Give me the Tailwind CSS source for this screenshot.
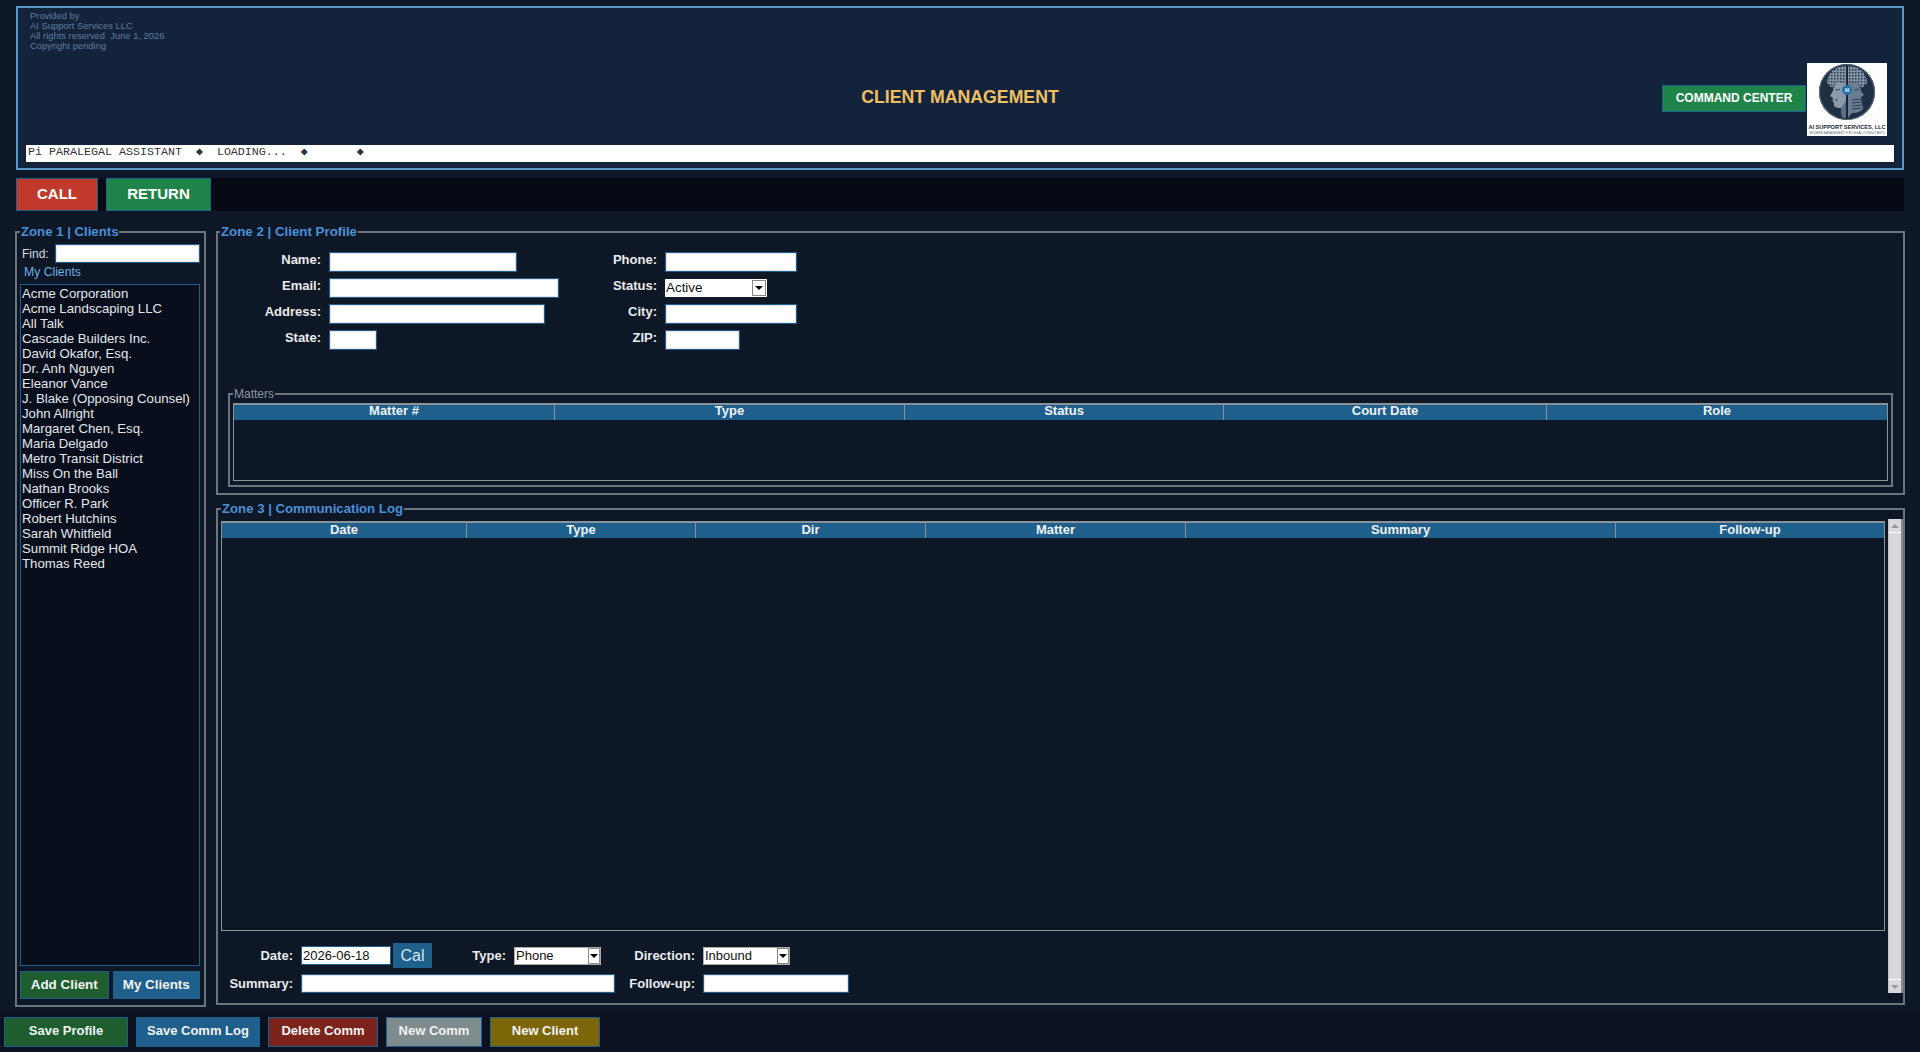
<!DOCTYPE html>
<html lang="en">

<head>
  <meta charset="UTF-8" />
  <title>Client Management</title>
  <script src="https://cdn.jsdelivr.net/npm/@tailwindcss/browser@4"></script>
</head>

<body class="h-[1052px] overflow-hidden bg-[#0d1726] font-['Liberation_Sans',Arial,sans-serif] text-[13px] text-white">
  <!-- header -->
  <header class="mx-[16px] mt-[6px] h-[164px] border-2 border-[#5499c7] bg-[#14233c] flex flex-col">
    <div class="h-[137px] grid grid-cols-[1fr_auto_1fr]">
      <div class="pl-[12px] pt-[3px] text-[9.4px] leading-[10px] text-[#5f7d9c]">
        <p>Provided by</p>
        <p>AI Support Services LLC</p>
        <p>All rights reserved&nbsp; June 1, 2026</p>
        <p>Copyright pending</p>
      </div>
      <h1 class="self-center pt-[42px] text-[17.7px] font-bold text-[#f0c060]">CLIENT MANAGEMENT</h1>
      <div class="flex justify-end items-start pt-[55px] pr-[15px]">
        <button class="mt-[22px] w-[144px] h-[27px] pb-[2px] bg-[#1e8449] border border-[#1f5f8b] text-[12px] font-bold">COMMAND CENTER</button>
        <svg width="80" height="73" viewBox="0 0 80 73" class="ml-[1px]">
          <defs>
            <pattern id="hatch" width="3" height="3" patternUnits="userSpaceOnUse">
              <rect width="3" height="3" fill="#8494a5" />
              <rect width="1.5" height="1.5" fill="#22344a" />
            </pattern>
          </defs>
          <rect width="80" height="73" fill="#fff" />
          <circle cx="40" cy="29" r="28" fill="#1f3044" />
          <circle cx="40" cy="29" r="27.5" fill="none" stroke="#56687c" stroke-width="1.2" />
          <!-- hair / circuit texture -->
          <path d="M39 3 C28 3 20 10 20 20 L25 25 L30 19 L39 20 Z" fill="url(#hatch)" />
          <path d="M41 3 C52 3 60 10 60 20 L55 25 L50 19 L41 20 Z" fill="url(#hatch)" />
          <!-- left head, facing left -->
          <path d="M39 20 L30 19 C27 22 26 26 26 28 L23 33 L26 35 L25.5 38 L27 40 L27 43 C29 45 32 45 34 45 L35 54 L39 55 Z" fill="#8c9bab" />
          <path d="M28 27 L33 26.5 M28 37 L31 37" stroke="#33465a" stroke-width="1" fill="none" />
          <path d="M34 45 L35 54 L39 55 L39 38 Z" fill="#5b6d81" />
          <!-- right head, facing right, bearded -->
          <path d="M41 20 L50 19 C53 22 54 26 54 28 L57 32 L54 34 L56 46 C52 50 48 50 45 50 L41 55 Z" fill="#6b7d91" />
          <path d="M47 27 L52 26.5" stroke="#2b3d52" stroke-width="1" fill="none" />
          <path d="M45 37 L55 36 M45 40 L55 39 M45 43 L55 42 M45 46 L54 45" stroke="#2b3d52" stroke-width="1" fill="none" />
          <rect x="39.2" y="2" width="1.6" height="54" fill="#16263a" />
          <circle cx="40" cy="27" r="5" fill="#2470a8" />
          <text x="40" y="29" text-anchor="middle" font-family="Liberation Sans" font-size="5" font-weight="700" fill="#fff">AI</text>
          <text x="40" y="66" text-anchor="middle" textLength="77" font-family="Liberation Sans" font-size="5.6" font-weight="700" fill="#1d2b3c">AI SUPPORT SERVICES, LLC</text>
          <text x="40" y="71" text-anchor="middle" textLength="75" font-family="Liberation Sans" font-size="2.8" fill="#4a5a6c">MODERN MANAGEMENT FOR LEGAL CONSULTANTS</text>
        </svg>
      </div>
    </div>
    <div class="mx-[8px] h-[17px] bg-white px-[2px] font-['Liberation_Mono',monospace] text-[11.67px] leading-[15px] text-[#333] whitespace-pre">Pi PARALEGAL ASSISTANT  ◆  LOADING...  ◆       ◆</div>
  </header>

  <!-- call bar -->
  <div class="mx-[16px] mt-[8px] h-[33px] bg-[#060a14] flex gap-[8px]">
    <button class="w-[82px] bg-[#c0392b] border border-[#1f5f8b] text-[15px] font-bold">CALL</button>
    <button class="w-[105px] bg-[#1e8449] border border-[#1f5f8b] text-[15px] font-bold">RETURN</button>
  </div>

  <!-- zones -->
  <main class="ml-[15px] mr-[15px] mt-[13px] flex gap-[10px]">
    <fieldset class="w-[191px] h-[783px] border-2 border-[#6b7580] px-[3px] flex flex-col">
      <legend class="px-[1px] text-[13.2px] leading-[16px] font-bold text-[#4a90d9]">Zone 1 | Clients</legend>
      <div class="mt-[4px] flex items-center h-[19px] pl-[2px] text-[#d5dbe2]">
        <span class="w-[33px] text-[12px]">Find:</span>
        <input class="w-[145px] h-[19px] bg-white border border-[#1f5f8b] shadow-[inset_0_0_0_1px_#e4e4e4]" />
      </div>
      <p class="pl-[4px] h-[21px] text-[12.2px] leading-[18px] text-[#6aaee0]">My Clients</p>
      <ul class="w-[180px] h-[682px] bg-[#080e1c] border border-[#1f5f8b] pl-[1px] pt-[1px] text-[13.2px] leading-[15px] text-[#e4e8ec]">
        <li>Acme Corporation</li>
        <li>Acme Landscaping LLC</li>
        <li>All Talk</li>
        <li>Cascade Builders Inc.</li>
        <li>David Okafor, Esq.</li>
        <li>Dr. Anh Nguyen</li>
        <li>Eleanor Vance</li>
        <li>J. Blake (Opposing Counsel)</li>
        <li>John Allright</li>
        <li>Margaret Chen, Esq.</li>
        <li>Maria Delgado</li>
        <li>Metro Transit District</li>
        <li>Miss On the Ball</li>
        <li>Nathan Brooks</li>
        <li>Officer R. Park</li>
        <li>Robert Hutchins</li>
        <li>Sarah Whitfield</li>
        <li>Summit Ridge HOA</li>
        <li>Thomas Reed</li>
      </ul>
      <div class="mt-[5px] flex gap-[4px] w-[180px]">
        <button class="w-[89px] h-[28px] bg-[#1e5e2e] border border-[#1f5f8b] text-[13.4px] font-bold text-[#f0f3f5]">Add Client</button>
        <button class="w-[88px] h-[28px] bg-[#1f5f8b] text-[13.4px] font-bold text-[#f0f3f5]">My Clients</button>
      </div>
    </fieldset>

    <div class="flex-1 flex flex-col gap-[6px]">
      <fieldset class="h-[271px] border-2 border-[#6b7580]">
        <legend class="ml-[2px] px-[1px] text-[13.3px] leading-[16px] font-bold text-[#4a90d9]">Zone 2 | Client Profile</legend>
        <div class="pl-[2px] pt-[12px] h-[148px] grid grid-cols-[101px_230px_90px_132px] auto-rows-[20px] gap-x-[8px] gap-y-[6px] font-bold text-[#e8ecef]">
          <label class="text-right leading-[16px]">Name:</label>
          <input class="w-[188px] bg-white border border-[#1f5f8b] shadow-[inset_0_0_0_1px_#e4e4e4]" />
          <label class="text-right leading-[16px]">Phone:</label>
          <input class="bg-white border border-[#1f5f8b] shadow-[inset_0_0_0_1px_#e4e4e4]" />

          <label class="text-right leading-[16px]">Email:</label>
          <input class="bg-white border border-[#1f5f8b] shadow-[inset_0_0_0_1px_#e4e4e4]" />
          <label class="text-right leading-[16px]">Status:</label>
          <div class="w-[102px] h-[18px] mt-[1px] bg-white flex justify-between items-center pl-[1px] text-[13.4px] font-normal leading-[16px] text-[#111]">Active<span class="w-[14px] h-[16px] mr-[1px] border border-[#888] bg-white flex items-center justify-center"><span class="border-x-[4px] border-t-[4px] border-x-transparent border-t-black"></span></span></div>

          <label class="text-right leading-[16px]">Address:</label>
          <input class="w-[216px] bg-white border border-[#1f5f8b] shadow-[inset_0_0_0_1px_#e4e4e4]" />
          <label class="text-right leading-[16px]">City:</label>
          <input class="bg-white border border-[#1f5f8b] shadow-[inset_0_0_0_1px_#e4e4e4]" />

          <label class="text-right leading-[16px]">State:</label>
          <input class="w-[48px] bg-white border border-[#1f5f8b] shadow-[inset_0_0_0_1px_#e4e4e4]" />
          <label class="text-right leading-[16px]">ZIP:</label>
          <input class="w-[75px] bg-white border border-[#1f5f8b] shadow-[inset_0_0_0_1px_#e4e4e4]" />
        </div>
        <fieldset class="mx-[10px] h-[99px] border-2 border-[#6b7580] px-[3px]">
          <legend class="px-[1px] text-[12px] leading-[12px] text-[#8f98a1]">Matters</legend>
          <div class="mt-[3px] h-[78px] border border-[#8a929a]">
            <div class="h-[16px] bg-[#1f5f8b] grid grid-cols-[321px_350px_319px_323px_1fr] text-center font-bold leading-[12px] text-[#eef2f5] border-t border-[#8a929a]">
              <span class="border-r border-[#8a929a]">Matter #</span>
              <span class="border-r border-[#8a929a]">Type</span>
              <span class="border-r border-[#8a929a]">Status</span>
              <span class="border-r border-[#8a929a]">Court Date</span>
              <span>Role</span>
            </div>
          </div>
        </fieldset>
      </fieldset>

      <fieldset class="relative h-[504px] border-2 border-[#6b7580] pl-[3px]">
        <legend class="px-[1px] text-[13.2px] leading-[16px] font-bold text-[#4a90d9]">Zone 3 | Communication Log</legend>
        <div class="w-[1664px] h-[410px] mt-[4px] border border-[#8a929a]">
          <div class="h-[16px] bg-[#1f5f8b] grid grid-cols-[245px_229px_230px_260px_430px_1fr] text-center font-bold leading-[13px] text-[#eef2f5] border-t border-[#8a929a]">
            <span class="border-r border-[#8a929a]">Date</span>
            <span class="border-r border-[#8a929a]">Type</span>
            <span class="border-r border-[#8a929a]">Dir</span>
            <span class="border-r border-[#8a929a]">Matter</span>
            <span class="border-r border-[#8a929a]">Summary</span>
            <span>Follow-up</span>
          </div>
        </div>

        <div class="mt-[12px] flex items-center h-[25px] font-bold text-[#e8ecef]">
          <label class="w-[72px] text-right">Date:</label>
          <input value="2026-06-18" class="ml-[8px] w-[90px] h-[19px] bg-white border border-[#1f5f8b] pl-[1px] font-normal text-[#111]" />
          <button class="ml-[2px] w-[39px] h-[25px] bg-[#1f5f8b] text-[16px] font-normal text-[#d5e4ef]">Cal</button>
          <label class="w-[74px] text-right">Type:</label>
          <div class="ml-[8px] w-[87px] h-[18px] bg-white border border-[#aaa] flex justify-between items-center pl-[1px] font-normal text-[#111]">Phone<span class="w-[12px] h-[16px] border border-[#888] flex items-center justify-center"><span class="border-x-[4px] border-t-[4px] border-x-transparent border-t-black"></span></span></div>
          <label class="w-[94px] text-right">Direction:</label>
          <div class="ml-[8px] w-[87px] h-[18px] bg-white border border-[#aaa] flex justify-between items-center pl-[1px] font-normal text-[#111]">Inbound<span class="w-[12px] h-[16px] border border-[#888] flex items-center justify-center"><span class="border-x-[4px] border-t-[4px] border-x-transparent border-t-black"></span></span></div>
        </div>
        <div class="mt-[6px] flex items-center h-[19px] font-bold text-[#e8ecef]">
          <label class="w-[72px] text-right">Summary:</label>
          <input class="ml-[8px] w-[314px] h-[19px] bg-white border border-[#1f5f8b] shadow-[inset_0_0_0_1px_#e4e4e4]" />
          <label class="w-[80px] text-right">Follow-up:</label>
          <input class="ml-[8px] w-[146px] h-[19px] bg-white border border-[#1f5f8b] shadow-[inset_0_0_0_1px_#e4e4e4]" />
        </div>

        <!-- scrollbar sits over the fieldset edge -->
        <div class="absolute right-0 top-[2px] bottom-0 w-[15px] bg-[#d9d9d9] border-l border-[#c4c4c4] border-r-2 border-r-[#8a8a8a] flex flex-col justify-between">
          <div class="h-[14px] border-b border-white flex items-center justify-center"><span class="border-x-[4px] border-b-[4px] border-x-transparent border-b-[#9a9a9a]"></span></div>
          <div class="h-[14px] border-t border-white flex items-center justify-center"><span class="border-x-[4px] border-t-[4px] border-x-transparent border-t-[#9a9a9a]"></span></div>
        </div>
      </fieldset>
    </div>
  </main>

  <!-- bottom actions -->
  <footer class="mt-[5px] h-[42px] bg-[#0a1120] pl-[4px] pt-[5px] flex gap-[8px] font-bold text-[#f0f3f5]">
    <button class="w-[124px] h-[30px] pb-[3px] bg-[#1e5e2e] border border-[#1f5f8b]">Save Profile</button>
    <button class="w-[124px] h-[30px] pb-[3px] bg-[#1f5f8b]">Save Comm Log</button>
    <button class="w-[110px] h-[30px] pb-[3px] bg-[#7b241c] border border-[#1f5f8b]">Delete Comm</button>
    <button class="w-[96px] h-[30px] pb-[3px] bg-[#7f8c8d] border border-[#1f5f8b]">New Comm</button>
    <button class="w-[110px] h-[30px] pb-[3px] bg-[#7d6608] border border-[#1f5f8b]">New Client</button>
  </footer>
</body>

</html>
